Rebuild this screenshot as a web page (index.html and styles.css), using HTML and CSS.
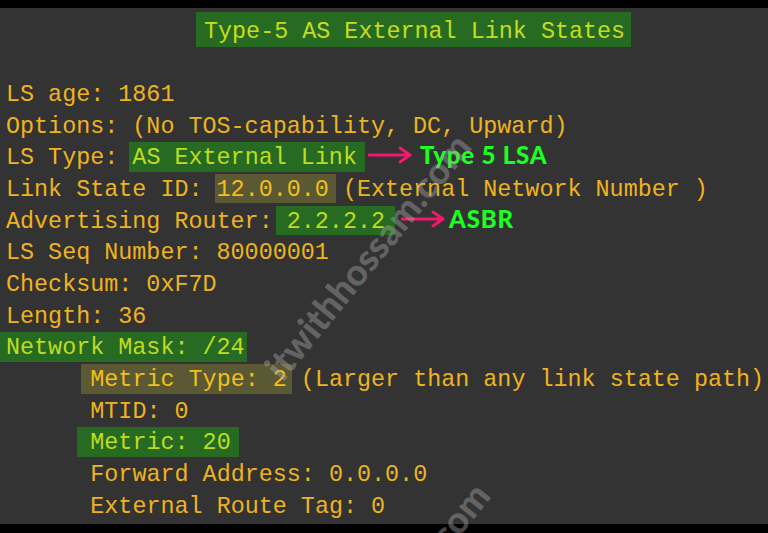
FILE: index.html
```html
<!DOCTYPE html>
<html lang="en">
<head>
    <meta charset="UTF-8">
    <meta name="viewport" content="width=device-width, initial-scale=1.0">
    <title>Type-5 AS External Link States</title>
    <link rel="stylesheet" href="styles.css">
</head>
<body>
    <div class="panel">
        <div class="dump">
            <div class="line title-line"><span class="title">Type-5 AS External Link States</span></div>
            <div class="line"> </div>
            <div class="line">LS age: 1861</div>
            <div class="line">Options: (No TOS-capability, DC, Upward)</div>
            <div class="line">LS Type: <span class="hl green lstype">AS External Link</span><span class="note note-lsa"><svg class="arrow" width="44" height="18" viewBox="0 0 44 18"><path d="M1 9 H41 M32 2 L42 9 L32 16" fill="none" stroke="#f2196c" stroke-width="3" stroke-linecap="round" stroke-linejoin="round"/></svg><b>Type 5 LSA</b></span></div>
            <div class="line">Link State ID: <span class="hl olive lsid">12.0.0.0</span> (External Network Number )</div>
            <div class="line">Advertising Router: <span class="hl green adv">2.2.2.2</span><span class="note note-asbr"><svg class="arrow" width="44" height="18" viewBox="0 0 44 18"><path d="M1 9 H41 M32 2 L42 9 L32 16" fill="none" stroke="#f2196c" stroke-width="3" stroke-linecap="round" stroke-linejoin="round"/></svg><b>ASBR</b></span></div>
            <div class="line">LS Seq Number: 80000001</div>
            <div class="line">Checksum: 0xF7D</div>
            <div class="line">Length: 36</div>
            <div class="line"><span class="hl green mask">Network Mask: /24</span></div>
            <div class="line indent"><span class="hl olive mtype">Metric Type: 2</span> (Larger than any link state path)</div>
            <div class="line indent">MTID: 0</div>
            <div class="line indent"><span class="hl green metric">Metric: 20</span></div>
            <div class="line indent">Forward Address: 0.0.0.0</div>
            <div class="line indent">External Route Tag: 0</div>
        </div>
    </div>
    <div class="watermark wm-one">itwithhossam.com</div>
    <div class="watermark wm-two">itwithhossam.com</div>
</body>
</html>
```

FILE: styles.css
```css
body {
    margin: 0;
    padding: 0;
    background-color: #000;
    position: relative;
    height: 533px;
    overflow: hidden;
}
.panel {
    margin-top: 8px;
    height: 516px;
    background-color: #333333;
    overflow: hidden;
}
.dump {
    font-family: "Liberation Mono", "DejaVu Sans Mono", monospace;
    font-size: 23.4px;
    line-height: 31.7px;
    color: #efb320;
    padding: 8.5px 0 0 6px;
}
.line {
    height: 31.7px;
    white-space: pre;
}
.indent {
    padding-left: 84.3px;
}
.title-line {
    padding-left: 190px;
}
.title {
    background-color: #276b22;
    color: #c6dc1e;
    padding: 7px 6px 2px 8px;
}
.hl {
    padding: 3px 0 0.5px 0;
}
.hl.green {
    background-color: #276b22;
    color: #bfdc1e;
}
.hl.olive {
    background-color: #5b5834;
    color: #f3bf1c;
}
.lstype {
    padding-left: 3px;
    padding-right: 8px;
    margin: 0 -8px 0 -3px;
}
.lsid {
    padding-left: 2px;
    padding-right: 7px;
    margin: 0 -7px 0 -2px;
}
.adv {
    padding-left: 11px;
    padding-right: 10px;
    margin: 0 -10px 0 -11px;
}
.mask {
    padding-left: 6px;
    padding-right: 2px;
    margin: 0 -2px 0 -6px;
}
.mtype {
    padding-left: 9px;
    padding-right: 5px;
    margin: 0 -5px 0 -9px;
}
.metric {
    padding-left: 13px;
    padding-right: 8px;
    margin: 0 -8px 0 -13px;
}
.note {
    font-family: Lato, "Open Sans", sans-serif;
    font-size: 24px;
    line-height: 24px;
    color: #1cff22;
}
.note b {
    font-weight: 900;
    letter-spacing: 0.8px;
}
.note-lsa {
    margin-left: 11px;
}
.note-lsa .arrow {
    margin-right: 8px;
}
.note-asbr {
    margin-left: 16px;
}
.note-asbr .arrow {
    margin-right: 4px;
}
.arrow {
    vertical-align: 0;
}
.watermark {
    position: absolute;
    font-family: Lato, "Open Sans", sans-serif;
    font-weight: 900;
    font-size: 37px;
    line-height: 37px;
    color: rgba(170, 170, 170, 0.42);
    transform: rotate(-51deg);
    transform-origin: 0 100%;
    white-space: nowrap;
    pointer-events: none;
}
.wm-one {
    left: 286px;
    top: 348px;
}
.wm-two {
    left: 305px;
    top: 697px;
}
```
